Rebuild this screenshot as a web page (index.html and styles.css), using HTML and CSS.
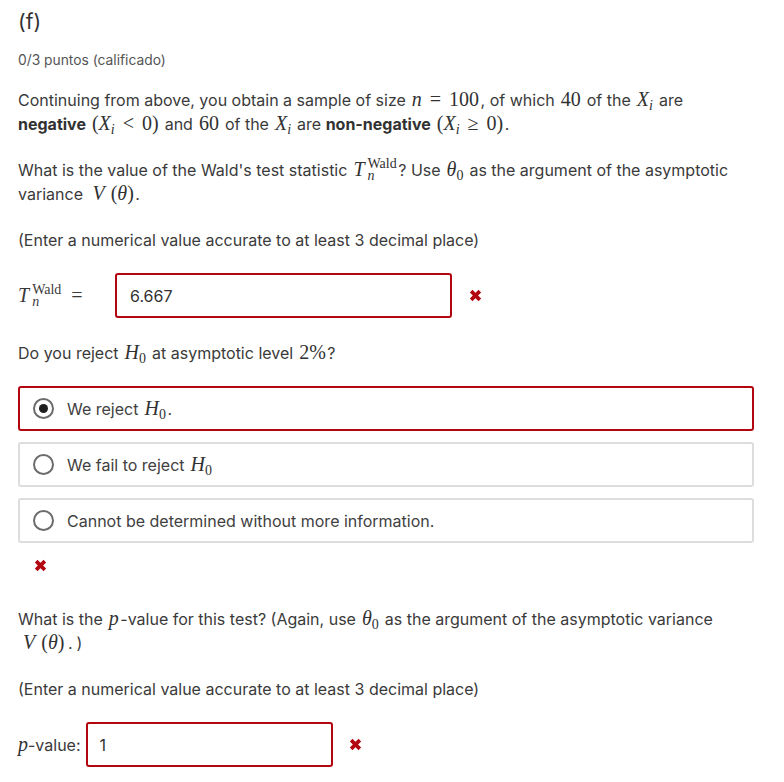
FILE: index.html
```html
<!DOCTYPE html>
<html lang="es">
<head>
<meta charset="utf-8">
<title>(f)</title>
<link rel="stylesheet" href="styles.css">
</head>
<body>
<h3 class="title">(f)</h3>
<div class="points">0/3 puntos (calificado)</div>

<p class="para p1">Continuing from above, you obtain a sample of size <span class="m"><i>n</i><span class="op">=</span>100</span>, of which <span class="m">40</span> of the <span class="m"><i>X</i><sub><i>i</i></sub></span> are <b>negative</b> <span class="m">(<i>X</i><sub><i>i</i></sub><span class="op">&lt;</span>0)</span> and <span class="m">60</span> of the <span class="m"><i>X</i><sub><i>i</i></sub></span> are <b>non-negative</b> <span class="m">(<i>X</i><sub><i>i</i></sub><span class="op">≥</span>0)</span>.</p>

<p class="para p2">What is the value of the Wald's test statistic <span class="m"><i>T</i><span class="subsup"><span class="ss-sup">Wald</span><span class="ss-sub"><i>n</i></span></span></span>? Use <span class="m"><i>θ</i><sub>0</sub></span> as the argument of the asymptotic variance <span class="m vspace"><i class="vv">V</i>(<i>θ</i>)</span>.</p>

<p class="para p3">(Enter a numerical value accurate to at least 3 decimal place)</p>

<div class="answer-row row1">
  <span class="label m"><i>T</i><span class="subsup"><span class="ss-sup">Wald</span><span class="ss-sub"><i>n</i></span></span><span class="op eq">=</span></span>
  <div class="input wide">6.667</div>
  <svg class="xmark" viewBox="0 0 12 12" width="13" height="13"><path d="M2 2 L10 10 M10 2 L2 10" stroke="#b20610" stroke-width="3.4"/></svg>
</div>

<p class="para p4">Do you reject <span class="m"><i>H</i><sub>0</sub></span> at asymptotic level <span class="m">2%</span>?</p>

<div class="options">
  <label class="option wrong">
    <span class="radio checked"></span>
    <span class="otext">We reject <span class="m"><i>H</i><sub>0</sub></span>.</span>
  </label>
  <label class="option">
    <span class="radio"></span>
    <span class="otext">We fail to reject <span class="m"><i>H</i><sub>0</sub></span></span>
  </label>
  <label class="option">
    <span class="radio"></span>
    <span class="otext">Cannot be determined without more information.</span>
  </label>
</div>

<div class="status">
  <svg class="xmark" viewBox="0 0 12 12" width="13" height="13"><path d="M2 2 L10 10 M10 2 L2 10" stroke="#b20610" stroke-width="3.4"/></svg>
</div>

<p class="para p5">What is the <span class="m"><i>p</i></span>-value for this test? (Again, use <span class="m"><i>θ</i><sub>0</sub></span> as the argument of the asymptotic variance <span class="m vspace"><i class="vv">V</i>(<i>θ</i>)</span><span class="dotp">.</span>)</p>

<p class="para p6">(Enter a numerical value accurate to at least 3 decimal place)</p>

<div class="answer-row row2">
  <span class="label"><span class="m"><i>p</i></span>-value:</span>
  <div class="input narrow">1</div>
  <svg class="xmark" viewBox="0 0 12 12" width="13" height="13"><path d="M2 2 L10 10 M10 2 L2 10" stroke="#b20610" stroke-width="3.4"/></svg>
</div>
</body>
</html>
```

FILE: styles.css
```css
html, body {
  background: #ffffff;
}
body {
  margin: 0;
  padding: 8px 30px 0 18px;
  font-family: Inter, "Noto Sans", sans-serif;
  font-size: 16px;
  line-height: 24px;
  color: #3a3a3a;
}
.title {
  margin: 0;
  font-size: 21px;
  font-weight: 400;
  line-height: 28px;
  color: #313131;
}
.points {
  margin-top: 14px;
  font-size: 13.8px;
  line-height: 20px;
  color: #555555;
}
.para {
  margin: 0;
}
.p1 { margin-top: 18px; }
.p2 { margin-top: 22px; }
.p3 { margin-top: 22px; }
.p4 { margin-top: 23px; }
.p5 { margin-top: 35px; }
.p6 { margin-top: 22px; }
b {
  font-weight: 700;
  color: #313131;
}
.m {
  font-family: "Liberation Serif", "DejaVu Serif", serif;
  font-size: 20px;
  line-height: 22px;
  white-space: nowrap;
  color: #313131;
  margin: 0 1.5px;
}
.m i {
  font-style: italic;
}
.m sub, .m sup {
  font-size: 14px;
  line-height: 0;
}
.m sub {
  vertical-align: -4px;
}
.op {
  margin: 0 8px;
}
.vspace {
  margin-left: 5px;
}
.vv {
  margin-right: 6px;
}
.dotp {
  margin: 0 4px 0 2px;
}
.subsup {
  display: inline-flex;
  flex-direction: column;
  vertical-align: 8px;
  line-height: 12px;
  margin-left: 3px;
}
.ss-sup, .ss-sub {
  font-size: 14px;
  line-height: 12px;
  display: block;
}
.answer-row {
  display: flex;
  align-items: center;
}
.row1 { margin-top: 21px; }
.row2 { margin-top: 21px; }
.label {
  color: #3a3a3a;
  line-height: 24px;
}
.row1 .label {
  width: 97px;
  flex: none;
  margin: 0;
}
.row2 .label .m {
  margin: 0;
}
.eq {
  margin-left: 10px;
}
.input {
  box-sizing: border-box;
  height: 45px;
  border: 2px solid #b20610;
  border-radius: 3px;
  padding: 0 13px;
  display: flex;
  align-items: center;
  font-size: 16px;
  color: #313131;
  background: #fff;
}
.wide { width: 337px; }
.narrow {
  width: 247px;
  margin-left: 5px;
  padding-left: 12px;
}
.row1 .xmark { margin-left: 17px; }
.row2 .xmark { margin-left: 16px; }
.xmark {
  display: block;
  flex: none;
}
.options {
  margin-top: 21px;
  display: flex;
  flex-direction: column;
  gap: 11px;
}
.option {
  box-sizing: border-box;
  height: 45px;
  border: 2px solid #dddddd;
  border-radius: 3px;
  display: flex;
  align-items: center;
  padding-left: 13px;
  color: #414141;
}
.option.wrong {
  border-color: #b20610;
}
.radio {
  box-sizing: border-box;
  width: 21px;
  height: 21px;
  border: 2px solid #6b6b6b;
  border-radius: 50%;
  flex: none;
  display: flex;
  align-items: center;
  justify-content: center;
  margin-right: 13px;
}
.radio.checked::after {
  content: "";
  width: 9px;
  height: 9px;
  border-radius: 50%;
  background: #1f1f1f;
}
.otext {
  line-height: 24px;
}
.status {
  margin-top: 16px;
  padding-left: 16px;
}
```
